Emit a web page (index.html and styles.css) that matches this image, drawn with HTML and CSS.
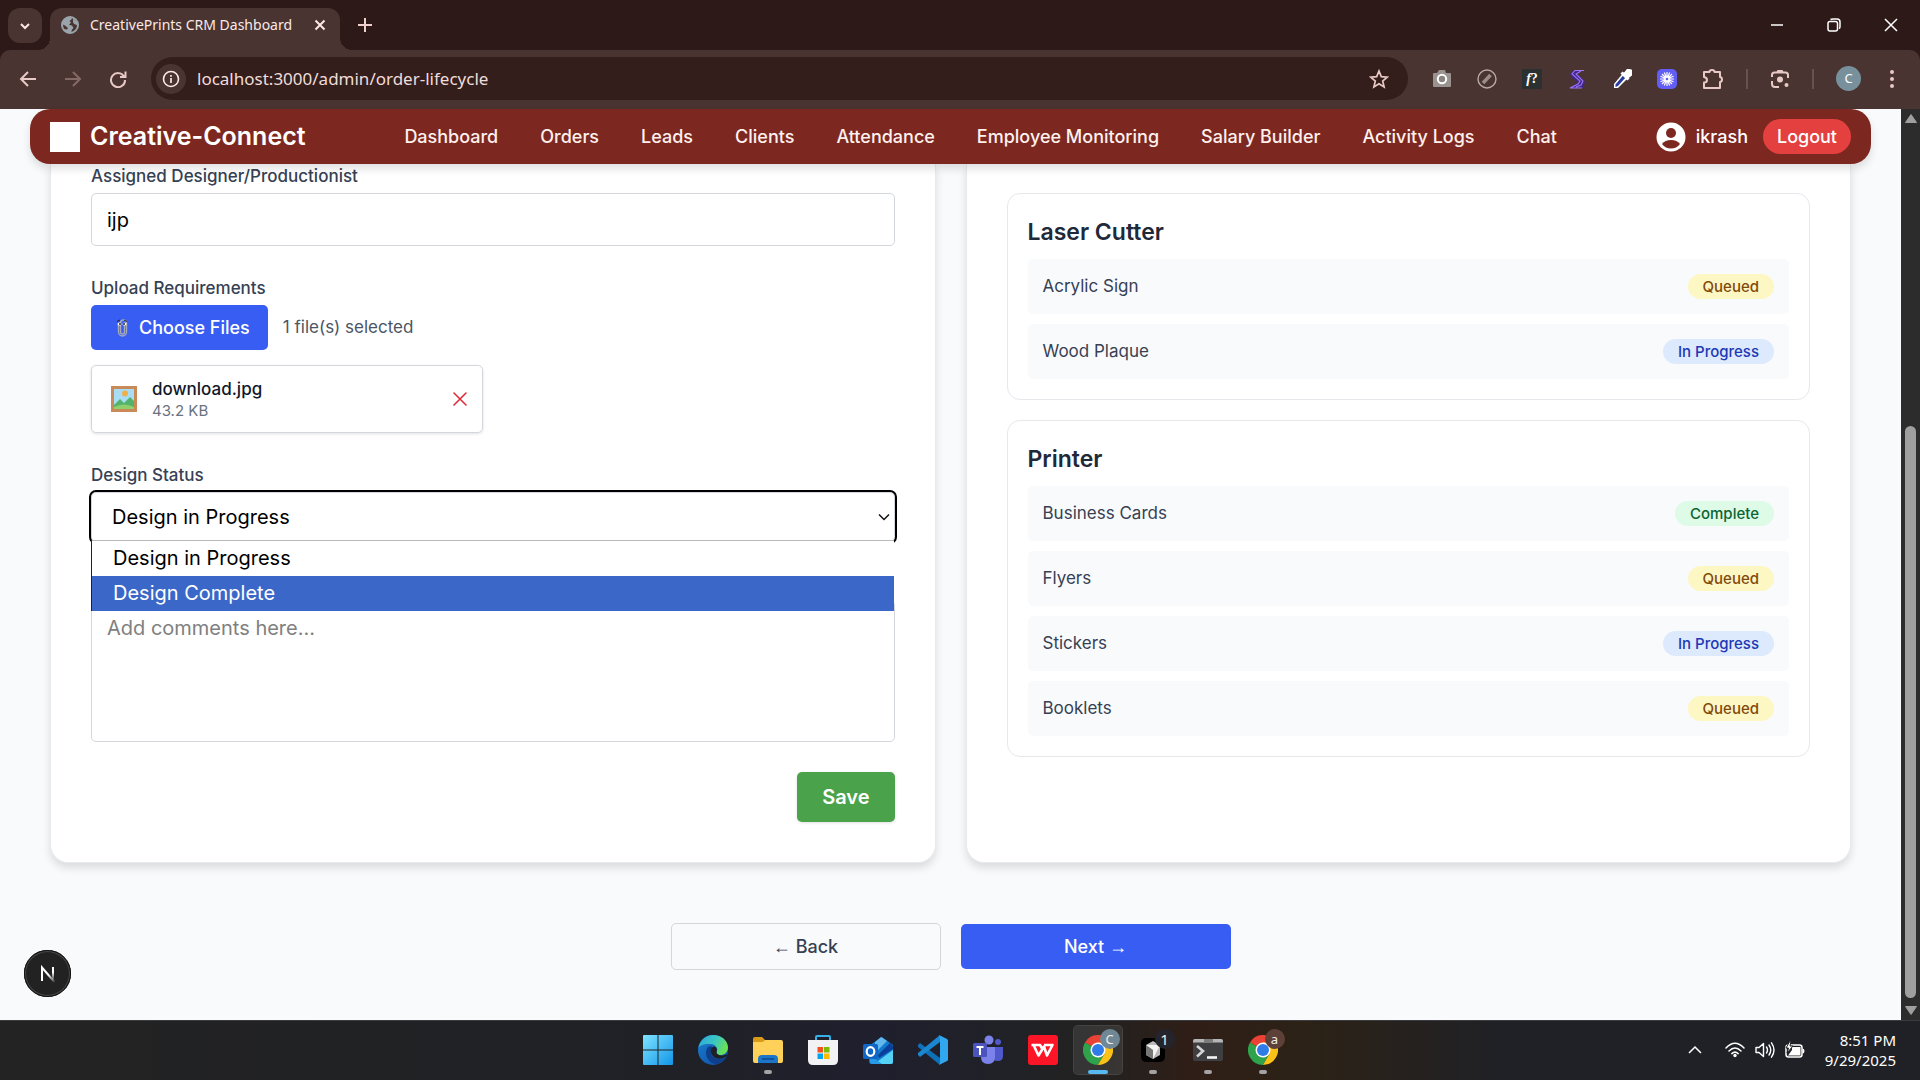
FILE: index.html
```html
<!DOCTYPE html>
<html lang="en">
<head>
<meta charset="utf-8">
<title>CreativePrints CRM Dashboard</title>
<link rel="stylesheet" href="styles.css">
</head>
<body>
<header class="browser">
  <div class="tabstrip">
    <button class="tab-search" aria-label="Search tabs"><svg width="12" height="12" viewBox="0 0 12 12"><path d="M2 4l4 4 4-4" fill="none" stroke="#fbe9e7" stroke-width="2"/></svg></button>
    <div class="tab">
      <svg width="18" height="18" viewBox="0 0 18 18"><circle cx="9" cy="9" r="8" fill="#4a3431" stroke="#9aa5ab" stroke-width="2"/><path d="M2 5.500Q5 1 10 1.500L11 3 8.500 5 10 6.500 8 9 11 9.500 12.500 12 11 13.500 10 17Q5 17 2 13L6 13.500 7 12 4 9.500 1 8z" fill="#9aa5ab"/><path d="M12 2.500l4 3.500v3l-3-1-1-2z" fill="#9aa5ab"/></svg>
      <span class="tab-title">CreativePrints CRM Dashboard</span>
      <button class="icon-btn tab-close" aria-label="Close tab"><svg width="12" height="12" viewBox="0 0 12 12"><path d="M1.500 1.500l9 9m0-9l-9 9" stroke="#fbe9e7" stroke-width="2"/></svg></button>
    </div>
    <button class="icon-btn new-tab" aria-label="New tab"><svg width="14" height="14" viewBox="0 0 14 14"><path d="M7 0v14M0 7h14" stroke="#f0d0cc" stroke-width="2"/></svg></button>
    <div class="window-controls">
      <button class="icon-btn" aria-label="Minimize"><svg width="14" height="14" viewBox="0 0 14 14"><path d="M1 7h12" stroke="#fff" stroke-width="1.500"/></svg></button>
      <button class="icon-btn" aria-label="Restore"><svg width="14" height="14" viewBox="0 0 14 14"><rect x="1" y="3.500" width="9.500" height="9.500" rx="2" fill="none" stroke="#fff" stroke-width="1.500"/><path d="M3.500 1.500Q4.500 1 6 1h4a3 3 0 0 1 3 3v4.500q0 1.500-.8 2.200" fill="none" stroke="#fff" stroke-width="1.500"/></svg></button>
      <button class="icon-btn" aria-label="Close"><svg width="14" height="14" viewBox="0 0 14 14"><path d="M1 1l12 12M13 1L1 13" stroke="#fff" stroke-width="1.500"/></svg></button>
    </div>
  </div>
  <div class="toolbar">
    <div class="nav-buttons">
      <button class="icon-btn" aria-label="Back"><svg width="18" height="18" viewBox="0 0 18 18"><path d="M17 9H2M9 2L2 9l7 7" fill="none" stroke="#e8c9c5" stroke-width="2"/></svg></button>
      <button class="icon-btn" aria-label="Forward"><svg width="18" height="18" viewBox="0 0 18 18"><path d="M1 9h15M9 2l7 7-7 7" fill="none" stroke="#846a67" stroke-width="2"/></svg></button>
      <button class="icon-btn" aria-label="Reload"><svg width="18" height="18" viewBox="0 0 18 18"><path d="M15 6.500A7 7 0 1 0 16 10M16.500 1.500V7H11" fill="none" stroke="#e8c9c5" stroke-width="2"/></svg></button>
    </div>
    <div class="omnibox">
      <button class="site-info" aria-label="View site information"><svg width="18" height="18" viewBox="0 0 18 18"><circle cx="9" cy="9" r="7.500" fill="none" stroke="#fbe9e7" stroke-width="1.600"/><path d="M9 8v5M9 5v1.700" stroke="#fbe9e7" stroke-width="1.700"/></svg></button>
      <input class="url" type="text" aria-label="Address" value="localhost:3000/admin/order-lifecycle">
      <button class="icon-btn" aria-label="Bookmark this tab"><svg width="20" height="20" viewBox="0 0 20 20"><path d="M10 2l2.300 5.600 6 .5-4.600 3.900 1.400 5.900L10 14.800 4.900 17.900 6.300 12 1.700 8.100l6-.5z" fill="none" stroke="#e8c9c5" stroke-width="1.700"/></svg></button>
    </div>
    <div class="extensions">
      <button class="icon-btn" aria-label="Screenshot"><svg width="20" height="20" viewBox="0 0 20 20"><path d="M2 4h3l2-3h6l1 3h4q1 0 1 1v12q0 1-1 1H2q-1 0-1-1V5q0-1 1-1z" fill="#99938f"/><circle cx="10" cy="10" r="4.200" fill="#8a8480" stroke="#fff" stroke-width="2"/></svg></button>
      <button class="icon-btn" aria-label="Blocker"><svg width="20" height="20" viewBox="0 0 20 20"><circle cx="10" cy="10" r="9" fill="none" stroke="#b9a9a6" stroke-width="1.400"/><path d="M6 14l7.500-8" stroke="#9b8d8a" stroke-width="3.500"/></svg></button>
      <button class="icon-btn font-finder" aria-label="Font finder"><i>f</i>?</button>
      <button class="icon-btn" aria-label="Stylus"><svg width="20" height="20" viewBox="0 0 20 20"><path d="M17 1H7L3 5l2 4 6 4-8 6h13l2-6-3-4-5-4z" fill="#42268c"/><path d="M17 1.500H8L5 5l8 7-2 3-8 4h12M14 2l-5 3 7 7-2 4-5 2" fill="none" stroke="#9b78f0" stroke-width="1.100"/></svg></button>
      <button class="icon-btn" aria-label="Colour picker"><svg width="20" height="20" viewBox="0 0 20 20"><path d="M12 3l5 5L6 19H2v-4z" fill="#fff"/><path d="M11.500 6L3.500 15.500v2.500l2.500-1L14 8z" fill="#273c9c"/><path d="M9.500 3.500l7 7M13 5l3-4 3 1 .500 3-4 3" stroke="#fff" stroke-width="3" fill="#fff"/></svg></button>
      <button class="icon-btn" aria-label="Loom"><svg width="20" height="20" viewBox="0 0 20 20"><rect width="20" height="20" rx="5" fill="#625df5"/><path d="M10 3v14M3 10h14M5 5l10 10M15 5L5 15M7.300 3.500l5.400 13M12.700 3.500l-5.400 13M3.500 7.300l13 5.400M3.500 12.700l13-5.400" stroke="#fff" stroke-width="1.200"/><circle cx="10" cy="10" r="1.300" fill="#625df5"/></svg></button>
      <button class="icon-btn" aria-label="Extensions"><svg width="22" height="22" viewBox="0 0 22 22"><path d="M2 4h5.500a2.500 2 0 0 1 5 0H18v5a2 2.500 0 0 1 0 5v6H2v-5.500q3 0 3-2.500T2 9z" fill="none" stroke="#e8c9c5" stroke-width="2" stroke-linejoin="round"/></svg></button>
      <span class="divider"></span>
      <button class="icon-btn" aria-label="Google Lens"><svg width="20" height="20" viewBox="0 0 20 20"><path d="M2 8V6q0-2.500 2.500-2.500h11Q18 3.500 18 6v3M2 12v3q0 3 3 3h4" fill="none" stroke="#e8c9c5" stroke-width="2"/><path d="M6 4l1.500-3h5L14 4z" fill="#e8c9c5"/><circle cx="10" cy="10.500" r="3" fill="#e8c9c5"/><circle cx="16.500" cy="16" r="2" fill="#e8c9c5"/></svg></button>
      <span class="divider"></span>
      <button class="avatar" aria-label="Profile">C</button>
      <button class="icon-btn" aria-label="Menu"><svg width="6" height="18" viewBox="0 0 6 18"><g fill="#e8c9c5"><circle cx="3" cy="2" r="2"/><circle cx="3" cy="9" r="2"/><circle cx="3" cy="16" r="2"/></g></svg></button>
    </div>
  </div>
</header>

<div class="viewport">
  <div class="page">
    <nav class="navbar">
      <a class="brand" href="#"><span class="brand-logo"></span>Creative-Connect</a>
      <div class="nav-links">
        <a href="#">Dashboard</a><a href="#">Orders</a><a href="#">Leads</a><a href="#">Clients</a><a href="#">Attendance</a><a href="#">Employee Monitoring</a><a href="#">Salary Builder</a><a href="#">Activity Logs</a><a href="#">Chat</a>
      </div>
      <div class="account">
        <a class="user" href="#"><svg width="30" height="30" viewBox="0 0 30 30"><circle cx="15" cy="15" r="14.500" fill="#fff"/><circle cx="15" cy="11" r="5" fill="#7c2820"/><path d="M6 22q3-4 9-4t9 4q-3.500 4.500-9 4.500T6 22z" fill="#7c2820"/></svg>ikrash</a>
        <button class="logout">Logout</button>
      </div>
    </nav>

    <main class="columns">
      <form class="card form" onsubmit="return false">
        <div class="field">
          <label for="designer">Assigned Designer/Productionist</label>
          <input class="control" id="designer" type="text" value="ijp">
        </div>
        <div class="field">
          <span class="label" id="upload-label">Upload Requirements</span>
          <div class="upload">
            <button type="button" class="choose" aria-describedby="upload-label"><svg width="12" height="20" viewBox="0 0 12 20"><path d="M8.500 7v7a2 2 0 0 1-4 0V5a3 3 0 0 1 6 0v9a4 4 0 0 1-8 0V7" fill="none" stroke="#a5a9b8" stroke-width="1.400"/><ellipse cx="3.500" cy="6" rx="2" ry="1.600" fill="#fff"/><ellipse cx="8.500" cy="6" rx="2" ry="1.600" fill="#fff"/><circle cx="4" cy="6" r="1" fill="#222"/><circle cx="8" cy="6" r="1" fill="#222"/><path d="M1 3.500l3-1.500M8 2l3 1.500" stroke="#222" stroke-width="1"/></svg>Choose Files</button>
            <span class="upload-count">1 file(s) selected</span>
          </div>
          <div class="file">
            <svg width="26" height="26" viewBox="0 0 26 26"><rect x="0" y="0" width="26" height="26" fill="#c98a5a"/><rect x="3" y="3" width="20" height="20" fill="#a9dcf5"/><circle cx="14" cy="7.500" r="3" fill="#efb04a"/><path d="M3 19l6-6 4 4 6-6 4 4v8H3z" fill="#53b36c"/><path d="M3 21q10-5 20 0v2H3z" fill="#8fd06c"/></svg>
            <div class="file-info"><span class="file-name">download.jpg</span><span class="file-size">43.2 KB</span></div>
            <button type="button" class="icon-btn file-remove" aria-label="Remove file"><svg width="14" height="14" viewBox="0 0 14 14"><path d="M1 1l12 12M13 1L1 13" stroke="#dc2f3a" stroke-width="1.600" stroke-linecap="round"/></svg></button>
          </div>
        </div>
        <div class="field">
          <label for="status">Design Status</label>
          <div class="select-wrap">
            <select class="select" id="status"><option>Design in Progress</option><option>Design Complete</option></select>
            <svg class="select-arrow" width="12" height="8" viewBox="0 0 12 8"><path d="M1 1.500l5 5 5-5" fill="none" stroke="#111" stroke-width="1.500"/></svg>
            <ul class="popup" role="listbox" aria-label="Design Status options">
              <li role="option">Design in Progress</li>
              <li role="option" class="active" aria-selected="true">Design Complete</li>
            </ul>
          </div>
        </div>
        <div class="field comments-field">
          <textarea class="control comments" id="comments" aria-label="Comments" placeholder="Add comments here..."></textarea>
        </div>
        <button class="save">Save</button>
      </form>

      <section class="card queues">
        <div class="queue">
          <h2>Laser Cutter</h2>
          <ul class="jobs">
            <li>Acrylic Sign<span class="badge queued">Queued</span></li>
            <li>Wood Plaque<span class="badge progress">In Progress</span></li>
          </ul>
        </div>
        <div class="queue">
          <h2>Printer</h2>
          <ul class="jobs">
            <li>Business Cards<span class="badge complete">Complete</span></li>
            <li>Flyers<span class="badge queued">Queued</span></li>
            <li>Stickers<span class="badge progress">In Progress</span></li>
            <li>Booklets<span class="badge queued">Queued</span></li>
          </ul>
        </div>
      </section>
    </main>

    <div class="steps">
      <button class="back"><span class="arrow">←</span> Back</button>
      <button class="next">Next <span class="arrow">→</span></button>
    </div>

    <button class="dev-tools" aria-label="Open Next.js dev tools"><svg width="18" height="18" viewBox="0 0 18 18"><defs><linearGradient id="n1" x1="0" y1="0" x2="1" y2="1"><stop offset=".5" stop-color="#fff"/><stop offset="1" stop-color="#fff" stop-opacity=".1"/></linearGradient><linearGradient id="n2" x1="0" y1="0" x2="0" y2="1"><stop offset=".4" stop-color="#fff"/><stop offset="1" stop-color="#fff" stop-opacity=".1"/></linearGradient></defs><path d="M3 16V2.500L15.500 17" fill="none" stroke="url(#n1)" stroke-width="2"/><rect x="13" y="2" width="2" height="13" fill="url(#n2)"/></svg></button>
  </div>
  <div class="scrollbar">
    <svg width="12" height="9" viewBox="0 0 12 9"><path d="M6 0.500L11.500 8.500H.5z" fill="#9f9f9f" stroke="#9f9f9f" stroke-linejoin="round"/></svg>
    <div class="track"><div class="thumb"></div></div>
    <svg width="12" height="9" viewBox="0 0 12 9"><path d="M6 8.500L.5.500h11z" fill="#9f9f9f" stroke="#9f9f9f" stroke-linejoin="round"/></svg>
  </div>
</div>

<footer class="taskbar">
  <div class="apps">
    <button class="app" aria-label="Start"><svg width="30" height="30" viewBox="0 0 30 30"><defs><linearGradient id="win" x1="0" y1="0" x2="1" y2="1"><stop offset="0" stop-color="#7fe3ff"/><stop offset="1" stop-color="#1296e8"/></linearGradient></defs><path d="M1 0h13.500v14.500H0V1q0-1 1-1zM15.500 0H29q1 0 1 1v13.500H15.500zM0 15.500h14.500V30H1q-1 0-1-1zM15.500 15.500H30V29q0 1-1 1H15.500z" fill="url(#win)"/></svg></button>
    <button class="app" aria-label="Microsoft Edge"><svg width="30" height="30" viewBox="0 0 30 30"><defs><linearGradient id="ed1" x1="0" y1="0" x2="1" y2=".4"><stop offset="0" stop-color="#2aa5e0"/><stop offset=".6" stop-color="#3cc8c0"/><stop offset="1" stop-color="#67e05a"/></linearGradient><linearGradient id="ed2" x1="0" y1="0" x2="1" y2="1"><stop offset="0" stop-color="#1b80d4"/><stop offset="1" stop-color="#0c4ba0"/></linearGradient></defs><circle cx="15" cy="15" r="15" fill="url(#ed2)"/><path d="M.5 13C2 5 8 0 15 0c9 0 15 6 15 12.500 0 5-4 7.500-7.500 7.500-3 0-5-1.500-4-3 2-3-.5-7.500-5.500-8C7 8.500 2 10 .5 13z" fill="url(#ed1)"/><path d="M10 12c-5 6 0 17 9 17 4-1 7.500-4 9-6.500-8 4-15 .5-15-5 0-2 1-3.500 2-4.500-1-2-3.500-2.500-5-1z" fill="#0f3f8a"/><path d="M18.500 17c1-2 .5-4.500-2-5.500-3 0-4 4-3.500 6 1 4 5 7 10 6 3-.5 5-1.500 5.800-2.500.6-1 0-2-1-1.300-4 1.800-9.300.3-9.300-2.700z" fill="#1f2026"/></svg></button>
    <button class="app running" aria-label="File Explorer"><svg width="30" height="30" viewBox="0 0 30 30"><path d="M0 6V4q0-2 2-2h7l3 3v5H0z" fill="#d99a18"/><path d="M0 7h10l2-2h16q2 0 2 2v19q0 2-2 2H2q-2 0-2-2z" fill="#ffd158"/><path d="M5 28v-4q0-4 4-4h12q4 0 4 4v4z" fill="#1b75c9"/><path d="M9 23h12v2H9z" fill="#0d539c"/></svg></button>
    <button class="app" aria-label="Microsoft Store"><svg width="30" height="30" viewBox="0 0 30 30"><path d="M8 8V2q0-1 1-1h12q1 0 1 1v6" fill="none" stroke="#35b2ea" stroke-width="2"/><path d="M0 5h30v20q0 5-5 5H5q-5 0-5-5z" fill="#f2f2f4"/><path d="M9.500 12H15v5.500H9.500z" fill="#f25022"/><path d="M16 12h5.500v5.500H16z" fill="#7fba00"/><path d="M9.500 18.500H15V24H9.500z" fill="#00a4ef"/><path d="M16 18.500h5.500V24H16z" fill="#ffb900"/></svg></button>
    <button class="app" aria-label="Outlook"><svg width="30" height="30" viewBox="0 0 30 30"><path d="M7 10L19 2l11 8v17q0 2-2 2H9q-3 0-3-3z" fill="#1279cf"/><path d="M12 7l6-5 6 4-12 12z" fill="#62b8ed"/><path d="M15 20L27 8l3 3v3L16 23z" fill="#0b3f99"/><path d="M11 29l19-14v12q0 2-2 2z" fill="#55d2f3"/><path d="M7 20l12 9H9q-2 0-2-2z" fill="#2799e6"/><rect y="9" width="15" height="15" rx="1.500" fill="#0f66c4"/><ellipse cx="7.500" cy="16.500" rx="3.800" ry="4.300" fill="none" stroke="#fff" stroke-width="2.200"/></svg></button>
    <button class="app" aria-label="Visual Studio Code"><svg width="30" height="30" viewBox="0 0 30 30"><path d="M0 10l2-2 20 15v7L0 12z" fill="#0f70b8"/><path d="M0 20l2 2 20-15V0L0 18z" fill="#1b87d1"/><path d="M21 0l8 4q1 .500 1 1.500v19q0 1-1 1.500l-8 4q1-1 1-3V3q0-2-1-3z" fill="#31a7f0"/></svg></button>
    <button class="app" aria-label="Teams"><svg width="30" height="30" viewBox="0 0 30 30"><circle cx="25" cy="7" r="3" fill="#5059c9"/><path d="M19 12h11v9q0 5-5 5-6 0-6-5z" fill="#5059c9"/><circle cx="16" cy="5" r="4.500" fill="#7b83eb"/><path d="M8 12h14v10q0 7-7 7t-7-7z" fill="#7b83eb"/><rect y="8" width="14" height="14" rx="1.500" fill="#4b53bc"/><path d="M3.500 12h7M7 12v8" stroke="#fff" stroke-width="2"/></svg></button>
    <button class="app" aria-label="WPS Office"><svg width="30" height="30" viewBox="0 0 30 30"><rect width="30" height="30" rx="3" fill="#fc1526"/><path d="M3.500 10H12l3 5M5.500 10l5 10.500 5.500-9 3 9L24.500 10H16" fill="none" stroke="#fff" stroke-width="2.600" stroke-linejoin="round"/></svg></button>
    <button class="app current" aria-label="Google Chrome"><svg width="30" height="30" viewBox="0 0 30 30"><path d="M15 15L2 7.500A15 15 0 0 1 28 7.500z" fill="#ea4335"/><path d="M2 7.500A15 15 0 0 0 15 30l6.500-11.200L15 15z" fill="#2fa24c"/><path d="M28 7.500A15 15 0 0 1 15 30l6.500-11.200L15 7.500z" fill="#fbc116"/><circle cx="15" cy="15" r="7.500" fill="#fff"/><circle cx="15" cy="15" r="6" fill="#2f7be8"/></svg><span class="app-badge blue">C</span></button>
    <button class="app running" aria-label="Cursor"><svg width="30" height="30" viewBox="0 0 30 30"><rect x="3" y="3" width="24" height="24" rx="5" fill="#000"/><path d="M15 6l7 4v10l-7 4-7-4V10z" fill="#b9b9b9"/><path d="M8 10h14l-7 14v-9z" fill="#f4f4f4"/><path d="M8 10l7 5v9l-7-4z" fill="#777"/></svg><span class="app-badge dark">1</span></button>
    <button class="app running" aria-label="Terminal"><svg width="30" height="30" viewBox="0 0 30 30"><rect y="4" width="30" height="22" rx="2" fill="#3f3f41"/><path d="M0 7.500V6q0-2 2-2h26q2 0 2 2v1.500z" fill="#b5b5b5"/><path d="M11 4h9v3.500h-9z" fill="#7c7c7c"/><path d="M4 11l6 5-6 5.500" fill="none" stroke="#d5d5d5" stroke-width="2.600"/><path d="M14 22.500h10" stroke="#f4f4f4" stroke-width="2.600"/></svg></button>
    <button class="app running" aria-label="Google Chrome, second profile"><svg width="30" height="30" viewBox="0 0 30 30"><path d="M15 15L2 7.500A15 15 0 0 1 28 7.500z" fill="#ea4335"/><path d="M2 7.500A15 15 0 0 0 15 30l6.500-11.200L15 15z" fill="#2fa24c"/><path d="M28 7.500A15 15 0 0 1 15 30l6.500-11.200L15 7.500z" fill="#fbc116"/><circle cx="15" cy="15" r="7.500" fill="#fff"/><circle cx="15" cy="15" r="6" fill="#2f7be8"/></svg><span class="app-badge brown">a</span></button>
  </div>
  <div class="tray">
    <svg width="14" height="9" viewBox="0 0 14 9"><path d="M1 8l6-6 6 6" fill="none" stroke="#fff" stroke-width="1.500"/></svg>
    <div class="tray-status">
      <svg width="20" height="16" viewBox="0 0 20 16"><g fill="none" stroke="#fff" stroke-width="1.500" stroke-linecap="round"><path d="M1 6Q10-3.500 19 6M4 9q6-6 12 0M6.800 11.600q3.200-3 6.400 0"/></g><circle cx="10" cy="13.500" r="1.700" fill="#fff"/></svg>
      <svg width="20" height="18" viewBox="0 0 20 18"><g fill="none" stroke="#fff" stroke-width="1.400" stroke-linejoin="round" stroke-linecap="round"><path d="M1 6.500h3l4.500-4v13l-4.500-4H1z"/><path d="M11.500 6q2 3 0 6M14 4q3.500 5 0 10M16.500 1.800q5 7.200 0 14.400"/></g></svg>
      <svg width="20" height="18" viewBox="0 0 20 18"><rect x="1" y="4" width="16" height="12" rx="2.500" fill="none" stroke="#fff" stroke-width="1.500"/><path d="M17.500 7.500q2 0 2 2.500t-2 2.500z" fill="#fff"/><path d="M7 6h8.500v8.500H3L7 9z" fill="#fff"/><path d="M5 0L1 7h2.500L2 12l6-7H5l1-5z" fill="#fff" stroke="#202126" stroke-width="1"/></svg>
    </div>
    <div class="clock"><span>8:51 PM</span><span>9/29/2025</span></div>
  </div>
</footer>
</body>
</html>
```
FILE: styles.css
```css
* { box-sizing: border-box; }

body {
  margin: 0;
  min-height: 100vh;
  display: flex;
  flex-direction: column;
  background: #2d1917;
  font-family: Inter, "Liberation Sans", sans-serif;
}

button, input, select, textarea { font: inherit; color: inherit; }
button { border: 0; padding: 0; background: none; cursor: pointer; }
a { color: inherit; text-decoration: none; }
ul { list-style: none; margin: 0; padding: 0; }
svg { display: block; flex: none; }

.icon-btn { display: flex; align-items: center; justify-content: center; }

/* Browser frame */
.browser { font-family: "Noto Sans", "Open Sans", sans-serif; color: #fbe9e7; }

.tabstrip { display: flex; height: 50px; padding: 8px 22px 0 8px; }
.tab-search {
  display: flex; align-items: center; justify-content: center;
  width: 34px; height: 35px; margin-right: 8px;
  border-radius: 12px; background: #4a3431;
}
.tab {
  position: relative;
  display: flex; align-items: center; gap: 11px;
  width: 290px; height: 42px; padding: 0 14px 8px 11px;
  border-radius: 12px 12px 0 0; background: #4a3431;
}
.tab::before, .tab::after {
  content: ""; position: absolute; bottom: 0; width: 12px; height: 12px;
}
.tab::before { left: -12px; background: radial-gradient(circle at 0 0, transparent 12px, #4a3431 12px); }
.tab::after { right: -12px; background: radial-gradient(circle at 100% 0, transparent 12px, #4a3431 12px); }
.tab-title { flex: 1; font-size: 14px; line-height: 20px; white-space: nowrap; }
.new-tab { width: 34px; height: 34px; margin-left: 8px; }
.window-controls { display: flex; gap: 43px; height: 34px; margin-left: auto; }

.toolbar {
  display: flex; align-items: center;
  height: 59px; padding: 0 25px 2px 19px;
  border-radius: 10px 10px 0 0; background: #4a3431;
}
.nav-buttons { display: flex; gap: 27px; width: 132px; }
.omnibox {
  flex: 1; display: flex; align-items: center; gap: 11px;
  height: 43px; padding: 0 19px 0 5px;
  border-radius: 22px; background: #331e1c;
}
.site-info {
  display: flex; align-items: center; justify-content: center;
  width: 30px; height: 30px; border-radius: 50%; background: #4a3431;
}
.url { flex: 1; min-width: 0; border: 0; padding: 0; background: none; font-size: 17px; line-height: 24px; color: #f0dcd9; outline: 0; }
.extensions { display: flex; align-items: center; gap: 25px; padding-left: 24px; }
.font-finder { width: 20px; height: 20px; background: #2b3131; color: #fff; font: bold 14px "Liberation Serif", serif; }
.divider { width: 2px; height: 20px; background: #6b514e; margin: 0 -3px; }
.avatar { width: 25px; height: 25px; margin-right: 3px; border-radius: 50%; background: #78909c; color: #fff; font-size: 13px; line-height: 25px; }

/* Page */
.viewport { flex: 1; display: flex; }
.page {
  position: relative;
  flex: 1; display: flex; flex-direction: column;
  padding: 0 30px 49px;
  background: #f9fafc;
}

.navbar {
  position: relative; z-index: 1;
  display: flex; align-items: center; justify-content: space-between;
  height: 55px; padding: 0 20px;
  border-radius: 20px; background: #7c2820;
  box-shadow: 0 5px 8px rgba(0, 0, 0, .12);
  color: #fff;
}
.brand { display: flex; align-items: center; gap: 10px; font-size: 25px; line-height: 35px; font-weight: 600; }
.brand-logo { width: 30px; height: 30px; background: #fff; }
.nav-links { display: flex; gap: 42px; font-size: 18px; line-height: 25px; font-weight: 500; color: #fdf0ee; }
.account { display: flex; align-items: center; gap: 15px; font-size: 18px; line-height: 25px; font-weight: 500; }
.user { display: flex; align-items: center; gap: 10px; }
.logout { height: 35px; padding: 0 14px; border-radius: 18px; background: #e3403f; }

.columns { display: grid; grid-template-columns: 1fr 1fr; gap: 30px; padding: 0 20px; }
.card {
  padding: 0 40px 40px;
  border: 1px solid #e8eaee; border-top: 0;
  border-radius: 0 0 18px 18px;
  background: #fff;
  box-shadow: 0 5px 8px rgba(0, 0, 0, .12);
}

.form { display: flex; flex-direction: column; gap: 30px; }
.field { display: flex; flex-direction: column; }
.field label, .label { margin-bottom: 4px; font-size: 17px; line-height: 25px; font-weight: 500; color: #364153; }
.control {
  height: 53px; padding: 12px 15px;
  border: 1px solid #d3d6da; border-radius: 5px;
  background: #fff; color: #000;
  font-size: 20px; line-height: 30px;
}
.upload { display: flex; align-items: center; gap: 15px; margin-bottom: 15px; }
.choose {
  display: flex; align-items: center; gap: 11px;
  height: 45px; padding: 0 18px 0 25px;
  border-radius: 5px; background: #385df2; color: #fff;
  font-size: 18px; font-weight: 500;
}
.upload-count { font-size: 17px; line-height: 25px; color: #4a5565; }
.file {
  display: flex; align-items: center; gap: 15px;
  width: 392px; height: 68px; padding: 0 15px 0 19px;
  border: 1px solid #d3d6da; border-radius: 5px;
  box-shadow: 0 1px 3px rgba(0, 0, 0, .12);
}
.file-info { flex: 1; display: flex; flex-direction: column; }
.file-name { font-size: 17px; line-height: 24px; font-weight: 500; color: #101828; }
.file-size { font-size: 15px; line-height: 20px; color: #6a7282; }

.select-wrap { position: relative; display: flex; align-items: center; }
.select {
  appearance: none;
  flex: 1; height: 50px; padding: 0 20px;
  border: 1px solid #d3d6da; border-radius: 5px;
  outline: 2px solid #000;
  background: #fff; color: #000; font-size: 20px;
}
.select-arrow { position: absolute; right: 5px; pointer-events: none; }
.popup {
  position: absolute; z-index: 2; top: 48px; left: 1px; right: 1px;
  border-top: 1px solid #b9b9b9; background: #fff;
  box-shadow: -1px 0 0 #222;
  color: #000; font-size: 20px; line-height: 35px;
}
.popup li { padding: 0 21px; }
.popup .active { background: #3b67c9; color: #fff; }

.comments-field { padding-top: 28px; }
.comments { height: 142px; resize: none; }
.comments::placeholder { color: #808080; opacity: 1; }
.save {
  align-self: flex-end;
  height: 50px; padding: 0 25px;
  border-radius: 5px; background: #4aa34a; color: #fff;
  box-shadow: 0 1px 3px rgba(0, 0, 0, .12);
  font-size: 20px; font-weight: 600;
}

.queues { display: flex; flex-direction: column; gap: 20px; padding-top: 29px; }
.queue { padding: 20px; border: 1px solid #e6e8ec; border-radius: 13px; }
.queue h2 { margin: 0 0 9px; font-size: 23px; line-height: 36px; font-weight: 600; color: #1e2939; }
.jobs { display: flex; flex-direction: column; gap: 10px; }
.jobs li {
  display: flex; align-items: center; justify-content: space-between;
  height: 55px; padding: 0 15px;
  border-radius: 5px; background: #f9fafc;
  font-size: 17px; line-height: 25px; color: #364153;
}
.badge { padding: 0 15px; border-radius: 13px; font-size: 15px; line-height: 25px; font-weight: 500; }
.queued { background: #fdf7c3; color: #814a0c; }
.progress { background: #dde9fd; color: #2038b5; }
.complete { background: #ddfbe7; color: #0b6431; }

.steps { display: grid; grid-template-columns: 270px 270px; align-items: center; justify-content: center; gap: 20px; padding-top: 60px; }
.steps button { border-radius: 5px; font-size: 18px; font-weight: 500; }
.steps .arrow { font-family: "Liberation Sans", sans-serif; font-weight: 400; }
.back { height: 47px; border: 1px solid #d3d6da; color: #364153; }
.next { height: 45px; background: #385df2; color: #fff; }

.dev-tools {
  position: absolute; left: 24px; bottom: 23px;
  display: flex; align-items: center; justify-content: center;
  width: 47px; height: 47px; border-radius: 50%;
  background: #222; box-shadow: inset 0 0 0 1px #111, inset 0 0 0 2px #484848;
}

.scrollbar {
  display: flex; flex-direction: column; align-items: center;
  width: 19px; padding: 5px 0; background: #2c2c2c;
}
.track { flex: 1; display: flex; flex-direction: column; justify-content: flex-end; padding: 8px 0; }
.thumb { width: 11px; height: 66%; border-radius: 6px; background: #9f9f9f; }

/* Taskbar */
.taskbar {
  display: grid; grid-template-columns: 1fr auto 1fr; align-items: center;
  height: 60px; padding: 0 24px 2px;
  border-top: 1px solid #3b3c40;
  background: linear-gradient(90deg, #232323 0, #202126 36%, #1f1f2e 45%, #202226 53%, #24211f 58%, #2f1e17 62%, #2c2216 68%, #202126 78%);
  font-family: "Noto Sans", "Open Sans", sans-serif;
}
.apps { grid-column: 2; display: flex; gap: 5px; }
.app {
  position: relative;
  display: flex; align-items: center; justify-content: center;
  width: 50px; height: 50px; border-radius: 5px;
}
.current { background: rgba(255, 255, 255, .09); box-shadow: inset 0 0 0 1px rgba(255, 255, 255, .07); }
.running::after, .current::after {
  content: ""; position: absolute; bottom: 1px; left: 50%;
  width: 8px; height: 4px; margin-left: -4px; border-radius: 2px; background: #a3a3a3;
}
.current::after { width: 20px; margin-left: -10px; background: #56b9f0; }
.app-badge {
  position: absolute; top: 4px; right: 3px;
  width: 20px; height: 20px; border-radius: 50%;
  color: #eee; font-size: 13px; line-height: 20px; text-align: center;
}
.blue { background: #718894; }
.dark { background: #24242c; font-size: 15px; }
.brown { background: #5d4037; }

.tray { display: flex; align-items: center; justify-content: flex-end; color: #fff; }
.tray-status { display: flex; align-items: center; gap: 10px; margin: 0 20px 0 23px; }
.clock { display: flex; flex-direction: column; text-align: right; font-size: 15px; line-height: 20px; }
```
